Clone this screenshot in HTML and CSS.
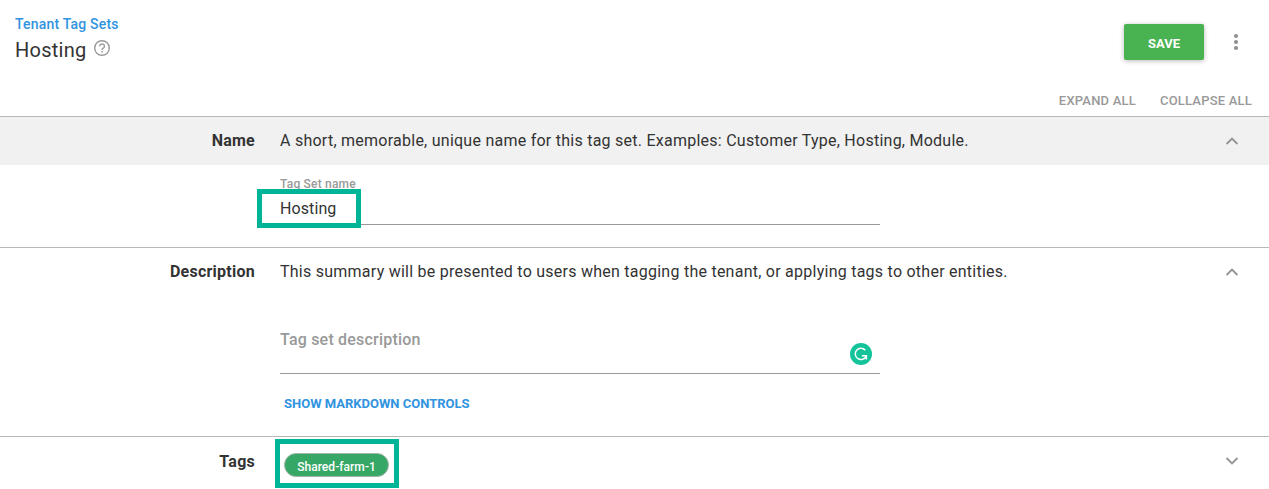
FILE: index.html
```html
<!DOCTYPE html>
<html lang="en">
<head>
<meta charset="utf-8">
<title>Hosting - Tenant Tag Sets</title>
<link rel="stylesheet" href="styles.css">
</head>
<body>
<header class="page-header">
  <div class="heading">
    <a class="breadcrumb">Tenant Tag Sets</a>
    <h1 class="title"><span class="title-text">Hosting</span>
      <svg class="help" width="18" height="18" viewBox="0 0 18 18"><circle cx="9" cy="9" r="7.3" fill="none" stroke="#999" stroke-width="1.4"/><path d="M6.6 7.3a2.4 2.3 0 1 1 3.7 1.9Q9 10 9 11.1" fill="none" stroke="#999" stroke-width="1.4"/><rect x="8.3" y="12" width="1.5" height="1.5" fill="#999"/></svg>
    </h1>
  </div>
  <div class="actions">
    <button class="save"><span class="save-label">SAVE</span></button>
    <svg class="more" width="6" height="18" viewBox="0 0 6 18" fill="#919191"><circle cx="3" cy="3" r="2.1"/><circle cx="3" cy="9" r="2.1"/><circle cx="3" cy="15" r="2.1"/></svg>
  </div>
</header>
<nav class="toggles"><span class="expand-all">EXPAND ALL</span><span class="collapse-all">COLLAPSE ALL</span></nav>
<main>
  <section class="section name-section">
    <div class="row shaded">
      <h2 class="label label-name">Name</h2>
      <p class="summary summary-name">A short, memorable, unique name for this tag set. Examples: Customer Type, Hosting, Module.</p>
      <svg class="chevron" width="14" height="10" viewBox="0 0 14 10"><path d="M1.6 8 7 2.6 12.4 8" fill="none" stroke="#949494" stroke-width="1.9"/></svg>
    </div>
    <div class="field name-field">
      <label class="field-label">Tag Set name</label>
      <div class="field-value">Hosting</div>
      <div class="highlight highlight-name"></div>
    </div>
  </section>
  <section class="section description-section">
    <div class="row">
      <h2 class="label label-description">Description</h2>
      <p class="summary summary-description">This summary will be presented to users when tagging the tenant, or applying tags to other entities.</p>
      <svg class="chevron" width="14" height="10" viewBox="0 0 14 10"><path d="M1.6 8 7 2.6 12.4 8" fill="none" stroke="#949494" stroke-width="1.9"/></svg>
    </div>
    <div class="field description-field">
      <span class="placeholder">Tag set description</span>
      <svg class="assistant" width="22" height="22" viewBox="0 0 22 22"><circle cx="11" cy="11" r="11" fill="#15c39a"/><path d="M15.3 7.2A5.7 5.7 0 1 0 16.2 13.1M11.9 12.7H16.4V16.6" fill="none" stroke="#fff" stroke-width="1.5"/></svg>
    </div>
    <div class="markdown-row"><a class="markdown">SHOW MARKDOWN CONTROLS</a></div>
  </section>
  <section class="section">
    <div class="row">
      <h2 class="label label-tags">Tags</h2>
      <div class="tags"><span class="tag">Shared-farm-1</span><div class="highlight highlight-tag"></div></div>
      <svg class="chevron" width="14" height="10" viewBox="0 0 14 10"><path d="M1.6 2 7 7.4 12.4 2" fill="none" stroke="#949494" stroke-width="1.9"/></svg>
    </div>
  </section>
</main>
</body>
</html>
```
FILE: styles.css
```css
* { box-sizing: border-box; }
body { margin: 0; height: 489px; overflow: hidden; background: #fff; color: #333; font: 16px/24px Roboto, sans-serif; letter-spacing: .25px; }
h1, h2, p { margin: 0; font: inherit; }
.page-header { display: flex; justify-content: space-between; height: 84px; padding: 14px 30px 0 15px; }
.heading { display: flex; flex-direction: column; }
.breadcrumb { color: #2f93e0; font-size: 14px; font-weight: 500; line-height: 20px; letter-spacing: .2px; }
.title { display: flex; gap: 7px; font-size: 20px; line-height: 32px; letter-spacing: .25px; }
.help { margin-top: 5px; }
.actions { display: flex; align-items: flex-start; gap: 29px; padding-top: 10px; }
.save { width: 80px; height: 36px; padding: 3px 0 0; border: 0; border-radius: 2px; background: #48b350; color: #fff; font: 700 13px/20px Roboto, sans-serif; box-shadow: 0 1px 5px rgba(0,0,0,.28); }
.more { margin-top: 9px; }
.toggles { display: flex; justify-content: flex-end; gap: 24px; height: 32px; padding: 7px 17px 0 0; color: #999; font-size: 13px; font-weight: 500; line-height: 20px; letter-spacing: .2px; }
.section { border-top: 1px solid #b8b8b8; }
.name-section { height: 131px; }
.description-section { height: 189px; }
.row { display: flex; align-items: center; height: 48px; padding-right: 30px; }
.shaded { background: #f1f1f1; }
.label { width: 255px; flex: none; text-align: right; font-weight: 700; }
.label-tags { padding-top: 2px; }
.summary { margin-left: 25px; white-space: nowrap; }
.chevron { margin-left: auto; }
.field { position: relative; width: 600px; margin-left: 280px; border-bottom: 1px solid #999; }
.name-field { height: 60px; padding-top: 11px; }
.field-label { display: block; color: #999; font-size: 12px; font-weight: 500; line-height: 16px; letter-spacing: .2px; }
.field-value { margin-top: 5px; line-height: 24px; letter-spacing: .1px; }
.highlight { position: absolute; border: 5px solid #00b497; }
.highlight-name { left: -23px; top: 24px; width: 104px; height: 39px; }
.description-field { display: flex; justify-content: space-between; height: 78px; padding: 31px 8px 0 0; }
.placeholder { margin-top: 1px; color: #999; font-weight: 500; letter-spacing: .2px; }
.assistant { margin-top: 16px; }
.markdown-row { padding: 19px 0 0 284px; line-height: 20px; }
.markdown { color: #2f93e0; font-size: 13px; font-weight: 700; letter-spacing: 0; }
.tags { position: relative; margin: 7px 0 0 29px; height: 24px; }
.tag { display: block; width: 105px; height: 24px; padding-top: 1px; border: 1px solid #a4b5aa; border-radius: 12px; background: #37a765; color: #fff; text-align: center; font-size: 12px; font-weight: 500; line-height: 25px; letter-spacing: .05px; }
.highlight-tag { left: -9px; top: -14px; width: 124px; height: 49px; }
```
